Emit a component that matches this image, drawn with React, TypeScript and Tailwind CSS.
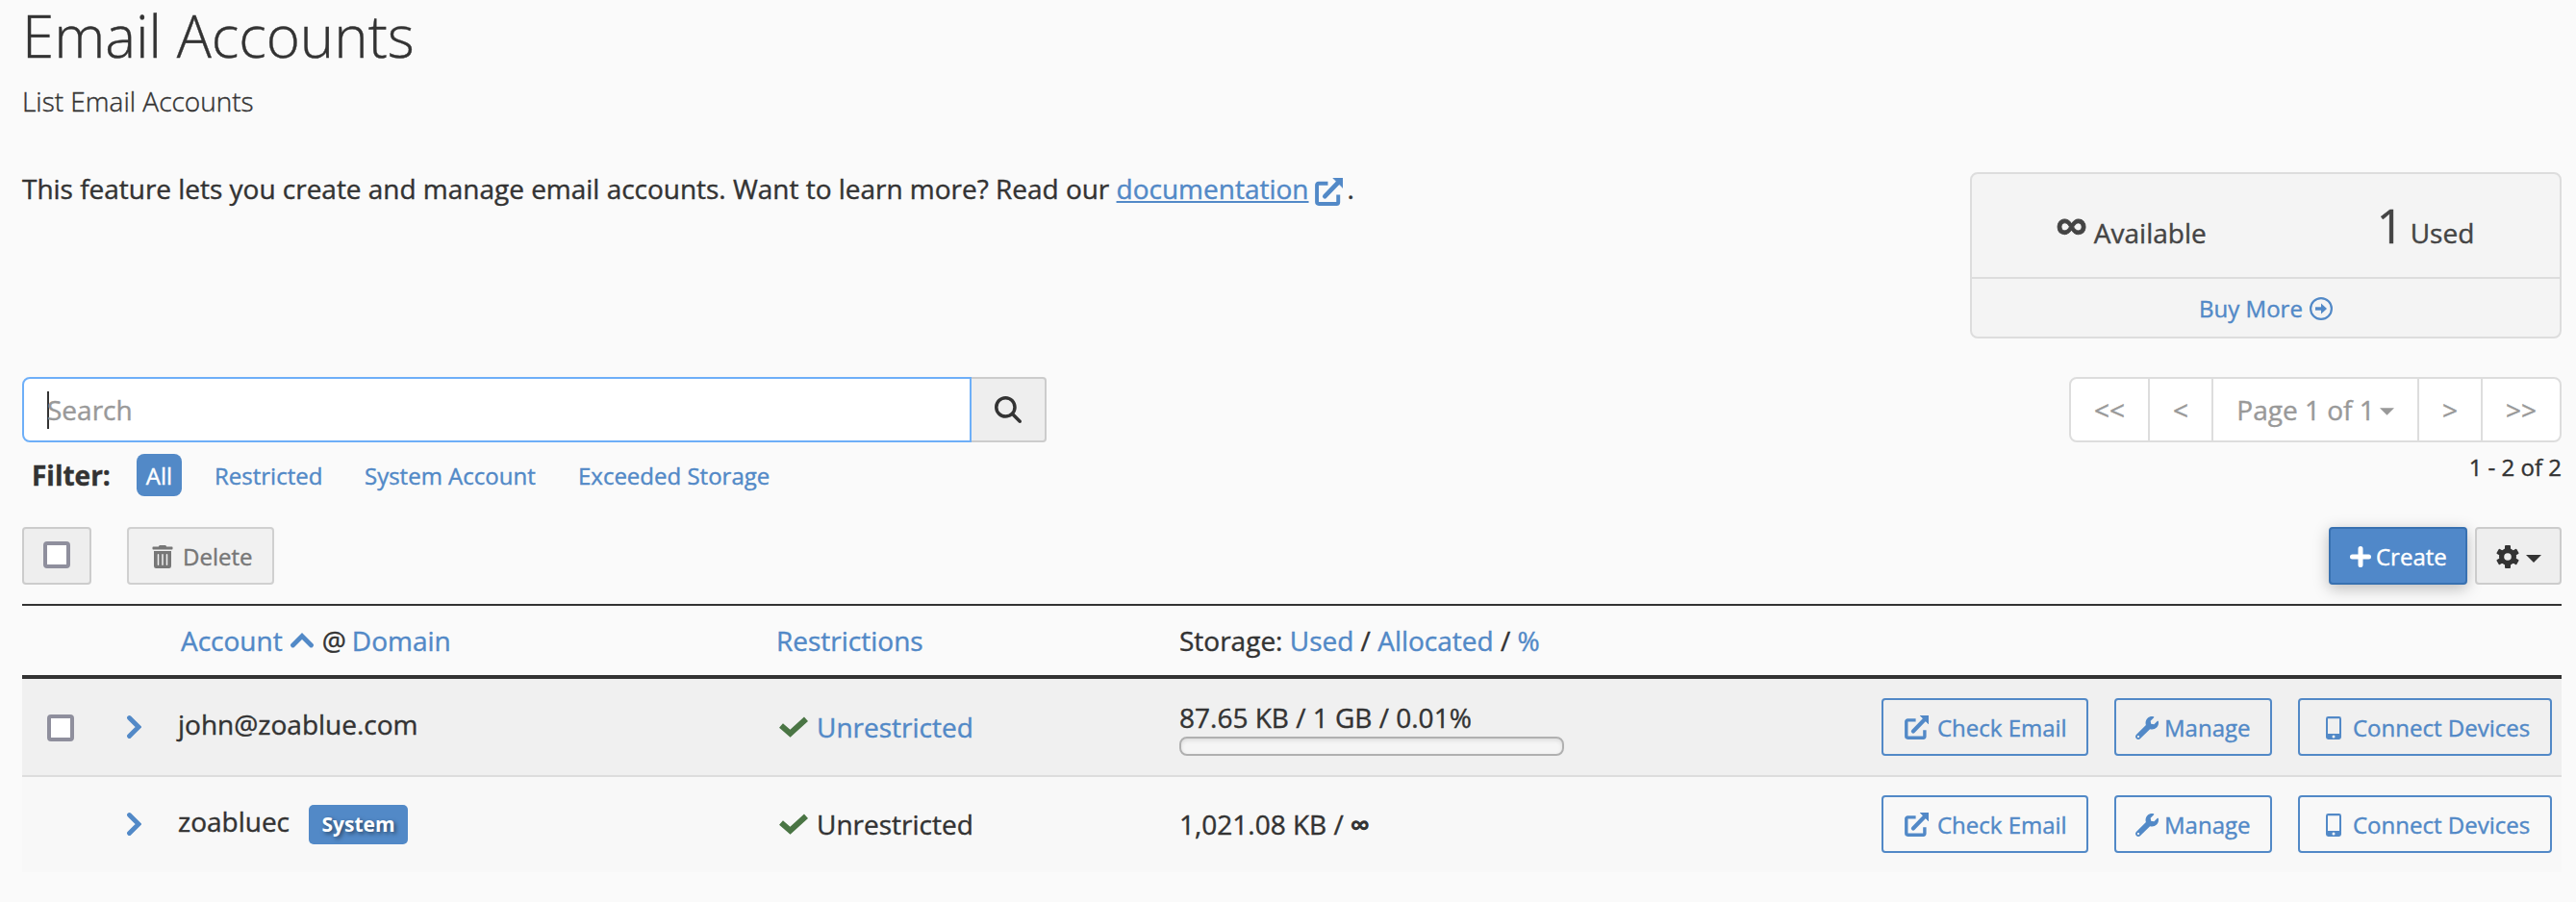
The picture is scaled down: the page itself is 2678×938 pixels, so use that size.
import React from "react";
import { FaMagnifyingGlass } from "react-icons/fa6";
import { FaWrench, FaTrashAlt } from "react-icons/fa";

const link = "text-[#5289c7]";

function External({ className }: { className: string }) {
  return (
    <svg viewBox="0 0 28 28" className={className} fill="none" stroke="currentColor" strokeWidth="3.8">
      <path d="M13 5.500H3.600a1.600 1.600 0 0 0-1.600 1.600v17.100a1.800 1.800 0 0 0 1.800 1.800h18a1.600 1.600 0 0 0 1.600-1.600V17" />
      <path d="M10 18.500 23 5" strokeWidth="4.600" strokeLinecap="round" />
      <path d="M18 0H28V10Z" fill="currentColor" stroke="currentColor" strokeWidth="0.800" />
    </svg>
  );
}

function Phone() {
  return (
    <svg viewBox="0 0 16 24" className="h-6 w-4" fill="currentColor" fillRule="evenodd">
      <path d="M2.400 0h11.200A2.400 2.400 0 0 1 16 2.400v19.200a2.400 2.400 0 0 1-2.400 2.400H2.400A2.400 2.400 0 0 1 0 21.600V2.400A2.400 2.400 0 0 1 2.400 0ZM2 2.200v15.800h12V2.200ZM8 19.500a1.500 1.500 0 1 0 0 3 1.500 1.500 0 0 0 0-3Z" />
    </svg>
  );
}

function Gear() {
  return (
    <svg viewBox="-12 -12 24 24" className="h-6 w-6" fill="#333">
      {[0, 60, 120].map((a) => (
        <rect key={a} x="-3" y="-12" width="6" height="24" rx="1" transform={`rotate(${a})`} />
      ))}
      <circle r="9" />
      <circle r="3.8" fill="#eee" />
    </svg>
  );
}

function Caret({ className }: { className: string }) {
  return (
    <svg viewBox="0 0 16 8" className={className} fill="currentColor">
      <path d="M0 0h16L8 8z" />
    </svg>
  );
}

function ChevronRight() {
  return (
    <svg viewBox="0 0 16 26" className="h-[26px] w-4 text-[#5289c7]" fill="none" stroke="currentColor" strokeWidth="4.8" strokeLinecap="round">
      <path d="m3.500 3.500 9.500 9.500-9.500 9.500" />
    </svg>
  );
}

function ChevronUp() {
  return (
    <svg viewBox="0 0 26 16" className="ml-[7px] mr-2 h-4 w-[26px] text-[#5289c7]" fill="none" stroke="currentColor" strokeWidth="4.8" strokeLinecap="round">
      <path d="m3.500 13 9.500-9.500 9.500 9.500" />
    </svg>
  );
}

function Check() {
  return (
    <svg viewBox="0 0 30 22" className="ml-[2px] h-[22px] w-[30px]" fill="none" stroke="#4a7544" strokeWidth="6" strokeLinecap="butt">
      <path d="m2 9.500 9.500 8.200L28 2.700" strokeLinejoin="miter" />
    </svg>
  );
}

function Box() {
  return <span className="block size-7 rounded-[4px] border-4 border-[#8f8f9d] bg-white" />;
}

const actionBtn = "flex h-[60px] items-center rounded-[4px] border-2 border-[#5289c7] pt-px text-[24px] text-[#5289c7]";

function Actions() {
  return (
    <div className="flex w-[707px] gap-[27px]">
      <button className={`${actionBtn} w-[215px] pl-[22px]`}>
        <External className="mr-[9px] size-[25px]" />
        Check Email
      </button>
      <button className={`${actionBtn} w-[164px] pl-5`}>
        <FaWrench className="mr-[6px] size-6" />
        Manage
      </button>
      <button className={`${actionBtn} w-[264px] pl-[27px]`}>
        <span className="mr-[12px]"><Phone /></span>
        Connect Devices
      </button>
    </div>
  );
}

export default function App() {
  return (
    <div className="h-[938px] w-[2678px] overflow-hidden whitespace-nowrap bg-[#fafafa] pl-[23px] pr-[15px] font-['Open_Sans',sans-serif] text-[28px] leading-[40px] text-[#333] [-webkit-text-stroke:0.4px]">
      <header className="h-[179px]">
        <h1 className="h-[79px] text-[60px] leading-[74px] font-light">Email Accounts</h1>
        <p className="mt-[6px] font-light">List Email Accounts</p>
      </header>

      <section className="flex h-[213px] items-start justify-between">
        <p className="-mt-[3px] flex">
          <span className="tracking-[-0.02px]">This feature lets you create and manage email accounts. Want to learn more? Read our&nbsp;</span>
          <a className={`${link} underline decoration-2 underline-offset-[2px]`}>documentation</a>
          <External className="ml-[6px] mt-[9px] size-[29px] text-[#5289c7]" />
          <span className="ml-[5px]">.</span>
        </p>
        <div className="h-[173px] w-[615px] rounded-[8px] border-2 border-[#ddd] bg-[#f4f4f4] text-[#444]">
          <div className="flex h-[109px] border-b-2 border-[#ddd] pl-[27px]">
            <div className="flex w-[276px] items-baseline justify-center pt-[23px]">
              <span className="text-[49px] leading-[60px] font-semibold [-webkit-text-stroke:0.8px]">∞</span>
              <span className="ml-[6px]">Available</span>
            </div>
            <div className="ml-[29px] flex w-[279px] items-baseline justify-center pt-[23px]">
              <span className="text-[49px] leading-[60px]">1</span>
              <span className="ml-[7px]">Used</span>
            </div>
          </div>
          <a className={`${link} flex h-[61px] items-center justify-center gap-[7px] text-[24px]`}>
            Buy More
            <svg viewBox="0 0 24 24" className="size-6" fill="none" stroke="currentColor" strokeWidth="2.2">
              <circle cx="12" cy="12" r="10.9" />
              <path d="M6 12h7" strokeWidth="3.4" />
              <path d="M12 6.500 18 12l-6 5.500z" fill="currentColor" stroke="none" />
            </svg>
          </a>
        </div>
      </section>

      <section className="flex h-[156px] justify-between">
        <div>
          <div className="flex h-[68px] w-[1065px]">
            <div className="flex w-[987px] items-center rounded-l-[8px] border-2 border-[#6eaff8] bg-white pl-6 text-[#999]">
              <span className="h-[39px] w-[2px] bg-[#333]" />
              <span className="-ml-[2px]">Search</span>
            </div>
            <button className="flex w-[78px] items-center rounded-r-[4px] border-2 border-l-0 border-[#ccc] bg-[#eee] pl-6">
              <FaMagnifyingGlass className="size-7 text-[#333]" />
            </button>
          </div>
          <div className="mt-3 flex h-11 items-center text-[24px]">
            <b className="w-[119px] pl-[10px] text-[28px]">Filter:</b>
            <span className="flex h-11 w-[47px] items-center justify-center rounded-[8px] bg-[#5289c7] pt-px text-white">All</span>
            <a className={`${link} ml-[34px] w-[156px] pt-px`}>Restricted</a>
            <a className={`${link} w-[222px] pt-px`}>System Account</a>
            <a className={`${link} pt-px`}>Exceeded Storage</a>
          </div>
        </div>
        <div className="flex flex-col items-end">
          <div className="flex h-[68px] w-[512px] divide-x-2 divide-[#ddd] rounded-[8px] border-2 border-[#ddd] bg-white text-center leading-[64px] text-[#999]">
            <span className="w-[82px]">&lt;&lt;</span>
            <span className="w-[66px]">&lt;</span>
            <span className="flex w-[214px] items-center justify-center">Page 1 of 1<Caret className="ml-[5px] mt-1 h-2 w-[15px]" /></span>
            <span className="w-[66px]">&gt;</span>
            <span className="grow">&gt;&gt;</span>
          </div>
          <span className="mt-[6px] text-[24px]">1 - 2 of 2</span>
        </div>
      </section>

      <section className="flex h-20 items-start justify-between text-[24px]">
        <div className="flex gap-[37px]">
          <button className="h-[60px] w-[72px] rounded-[4px] border-2 border-[#ccc] bg-[#eee] pb-[2px] pl-5"><Box /></button>
          <button className="flex h-[60px] w-[153px] items-center rounded-[4px] border-2 border-[#d0d0d0] bg-[#f1f1f1] pl-6 pt-px text-[#777]">
            <FaTrashAlt className="mr-[10px] h-6 w-[22px]" />
            Delete
          </button>
        </div>
        <div className="flex gap-2">
          <button className="flex h-[60px] w-[144px] items-center rounded-[4px] border-2 border-[#3871b1] bg-[#5088c9] pl-5 pt-px text-white shadow-[0_4px_16px_rgba(0,0,0,0.25)]">
            <svg viewBox="0 0 22 22" className="mr-[5px] size-[22px]" stroke="currentColor" strokeWidth="5" strokeLinecap="round">
              <path d="M11 2.500v17M2.500 11h17" />
            </svg>
            Create
          </button>
          <button className="flex h-[60px] w-[90px] items-center gap-[7px] rounded-[4px] border-2 border-[#ccc] bg-[#eee] pl-5 pt-px">
            <Gear />
            <Caret className="mt-1 h-2 w-4" />
          </button>
        </div>
      </section>

      <section>
        <div className="flex h-[78px] items-center border-t-2 border-b-4 border-[#333]">
          <div className="flex w-[784px] items-center pl-[165px]">
            <a className={link}>Account</a>
            <ChevronUp />
            <span className="mr-[6px]">@</span>
            <a className={link}>Domain</a>
          </div>
          <a className={`${link} w-[419px]`}>Restrictions</a>
          <div>
            Storage: <a className={link}>Used</a> / <a className={link}>Allocated</a> / <a className={link}>%</a>
          </div>
        </div>

        <div className="flex h-[102px] items-center border-b-2 border-[#ddd] bg-[#f0f0f0]">
          <div className="w-[108px] pl-[26px] pt-[2px]"><Box /></div>
          <ChevronRight />
          <span className="-mt-[7px] ml-[38px] w-[623px]">john@zoablue.com</span>
          <Check />
          <a className={`${link} ml-[9px] w-[377px]`}>Unrestricted</a>
          <div className="grow">
            <div className="h-10">87.65 KB / 1 GB / 0.01%</div>
            <div className="h-5 w-[400px] rounded-[8px] border-2 border-[#b0b0b0] bg-[#f5f5f5] shadow-[inset_0_2px_4px_rgba(0,0,0,0.1)]" />
          </div>
          <Actions />
        </div>

        <div className="flex h-[99px] items-center bg-[#f8f8f8] pb-px">
          <div className="w-[108px]" />
          <ChevronRight />
          <div className="ml-[38px] flex w-[623px] items-center">
            <span className="-mt-[7px]">zoabluec</span>
            <span className="ml-5 flex h-[41px] w-[103px] items-center justify-center rounded-[5px] bg-[#5289c7] text-[21px] font-bold text-white [text-shadow:2px_2px_4px_rgba(0,0,0,0.5)] [-webkit-text-stroke:0px]">System</span>
          </div>
          <Check />
          <span className="ml-[9px] w-[377px]">Unrestricted</span>
          <div className="grow">
            1,021.08 KB / <span className="[-webkit-text-stroke:1.2px]">∞</span>
          </div>
          <Actions />
        </div>
      </section>
    </div>
  );
}
